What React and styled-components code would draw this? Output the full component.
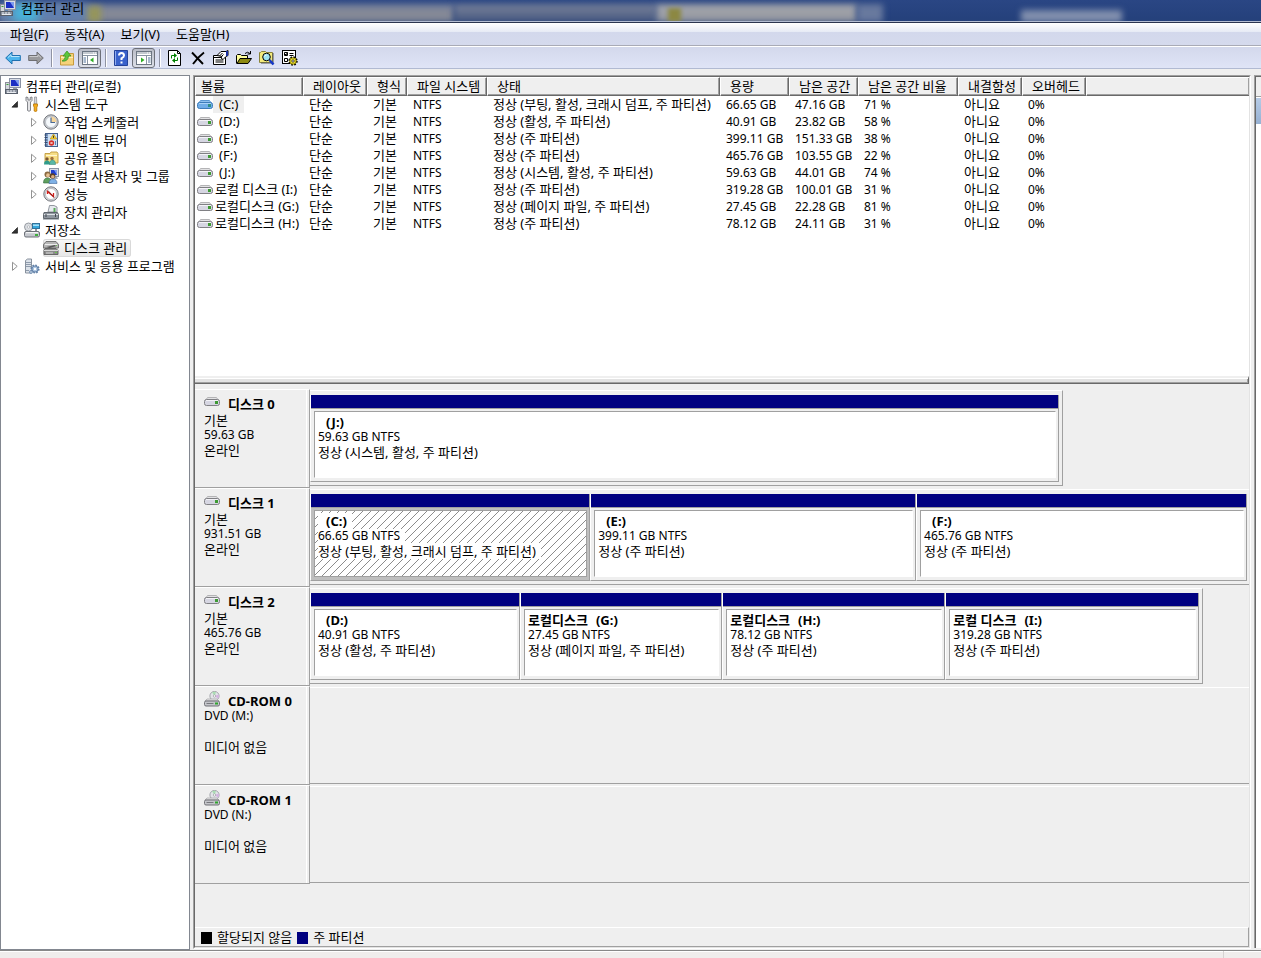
import React, { useState } from 'react';
import styled, { createGlobalStyle } from 'styled-components';

const GlobalStyle = createGlobalStyle`
  * {
    box-sizing: border-box;
  }

  body {
    margin: 0;
    background-color: #efefef;
    color: #000;
    font-family: 'Noto Sans', 'Noto Sans CJK KR', sans-serif;
    font-size: 13px;
    line-height: 15px;
  }

  button {
    font: inherit;
    color: inherit;
    border: none;
    background: none;
    padding: 0;
  }

  svg {
    display: block;
    flex-shrink: 0;
  }
`;

const Window = styled.div`
  min-height: 100vh;
  display: flex;
  flex-direction: column;
`;

const TitleBar = styled.header`
  position: relative;
  height: 23px;
  overflow: hidden;
  background: linear-gradient(#2a4684, #24407a);
  border-bottom: 1px solid #2b3550;
`;
const Glass = styled.div`
  position: absolute;
  top: ${(props) => props.$top || 4}px;
  bottom: 0;
  left: ${(props) => props.$left}%;
  width: ${(props) => props.$width}%;
  background: ${(props) => props.$color};
  filter: blur(${(props) => props.$blur || 3}px);
`;
const TitleEdge = styled.div`
  position: absolute;
  left: 0;
  right: 0;
  bottom: 0;
  height: 1px;
  background-color: #b4bdd2;
`;
const TitleText = styled.h1`
  position: relative;
  display: flex;
  align-items: center;
  gap: 5px;
  margin: 0;
  height: 16px;
  font-size: 13px;
  font-weight: 400;
`;

const MenuBar = styled.nav`
  display: flex;
  gap: 16px;
  height: 23px;
  padding: 0 10px;
  background: linear-gradient(#fff 0, #e6eaf5 9px, #d3d8ec 9px, #d5daed);
  border-bottom: 1px solid #a9abb6;
`;
const Toolbar = styled.div`
  display: flex;
  align-items: center;
  height: 23px;
  padding: 2px 0 0 1px;
  background: linear-gradient(#fff 0, #fff 1px, #d3d8ec 1px, #dfe4f6);
  border-bottom: 1px solid #b1bad2;
`;
const ToolButton = styled.button`
  display: flex;
  align-items: center;
  justify-content: center;
  width: 23px;
  height: 20px;
  border-radius: 3px;
  border: 1px solid ${(props) => (props.$pressed ? '#6d7079' : 'transparent')};
  background: ${(props) =>
    props.$pressed ? 'linear-gradient(#b9bcc7, #dcdfe8)' : 'none'};
`;
const Divider = styled.div`
  width: 8px;
  height: 18px;
  border-left: 1px solid #8f93a3;
  background: linear-gradient(90deg, #fff 1px, transparent 1px);
  background-clip: padding-box;
  margin-left: 4px;
  margin-right: -4px;
`;

const Body = styled.div`
  flex: 1;
  display: flex;
  gap: 3px;
  padding-top: 6px;
`;

const Tree = styled.ul`
  list-style: none;
  margin: 0;
  width: 190px;
  padding: 1px 0;
  background-color: #fff;
  border: 1px solid #828790;
`;
const TreeRow = styled.li`
  display: flex;
  align-items: center;
  height: 18px;
  padding-left: ${(props) => props.$indent}px;
`;
const Arrow = styled.button`
  width: 19px;
  height: 18px;
  display: flex;
  align-items: center;
  justify-content: center;
`;
const TreeLabel = styled.button`
  display: flex;
  align-items: center;
  gap: 5px;
  height: 18px;
  white-space: nowrap;

  span {
    padding-right: 4px;
  }

  ${(props) =>
    props.$selected &&
    `
    border-radius: 3px;
    background: linear-gradient(#f8f8f8, #e6e6e6);
    box-shadow: inset 0 0 0 1px #d9d9d9;
  `}
`;

const Panel = styled.main`
  flex: 1;
  min-width: 0;
  display: flex;
  flex-direction: column;
  border: 1px solid #a0a0a0;
  border-right-color: #fff;
  border-bottom-color: #fff;
  margin-bottom: 1px;
`;
const PanelInner = styled.div`
  flex: 1;
  display: flex;
  flex-direction: column;
  border: 1px solid #696969;
  border-right-color: #e3e3e3;
  border-bottom-color: #e3e3e3;
`;
const SidePanel = styled.aside`
  width: 7px;
  overflow: hidden;
  background-color: #fff;
  border-left: 1px solid #a0a0a0;
  border-top: 1px solid #a0a0a0;
  box-shadow: inset 1px 1px 0 #696969;
  margin-bottom: 2px;
  padding: 1px 0 0 1px;
`;
const SideHead = styled.div`
  height: 20px;
  background-color: #efefef;
  border-bottom: 1px solid #a0a0a0;
`;
const SideItem = styled.div`
  height: 26px;
  margin-top: 1px;
  background: linear-gradient(#b6cbe6, #96b1d3);
`;

const ListArea = styled.section`
  height: 299px;
  overflow: hidden;
  background-color: #fff;
`;
const Table = styled.table`
  width: 100%;
  table-layout: fixed;
  border-collapse: separate;
  border-spacing: 0;
`;
const Col = styled.col`
  width: ${(props) => (props.$width ? `${props.$width}px` : 'auto')};
`;
const Th = styled.th`
  height: 19px;
  padding: 0 0 0 ${(props) => (props.$first ? 5 : 9)}px;
  text-align: left;
  font-weight: 400;
  white-space: nowrap;
  overflow: hidden;
  background-color: #efefef;
  border: 1px solid #fff;
  border-right-color: #696969;
  border-bottom-color: #696969;
  box-shadow: inset -1px -1px 0 #a0a0a0;

  &:last-child {
    border-right: none;
  }
`;
const Td = styled.td`
  height: 17px;
  padding: 0 0 0 6px;
  white-space: nowrap;
  font-size: ${(props) => (props.$latin ? 12 : 13)}px;
`;
const VolumeTd = styled.td`
  height: 17px;
  padding: 0 0 0 2px;
  white-space: nowrap;
`;
const Volume = styled.div`
  display: flex;
  align-items: center;
  height: 17px;

  span {
    padding: 1px 5px 1px ${(props) => (props.$named ? 2 : 6)}px;
    background-color: ${(props) => (props.$selected ? '#efefef' : 'transparent')};
  }
`;

const Splitter = styled.div`
  height: 8px;
  border-top: 2px solid #efefef;
  border-bottom: 1px solid #696969;
  border-right: 1px solid #696969;
  background-color: #e3e3e3;
  box-shadow: inset 0 1px 0 #fff, inset -1px -1px 0 #a0a0a0;
`;

const Disks = styled.section`
  flex: 1;
  padding-top: 5px;
`;
const DiskRow = styled.article`
  display: flex;
  height: 99px;
`;
const DiskInfo = styled.div`
  width: 115px;
  flex-shrink: 0;
  padding: 7px 0 0 9px;
  border-top: 1px solid #fff;
  border-right: 1px solid #a0a0a0;
  border-bottom: 1px solid #a0a0a0;
  background: linear-gradient(270deg, transparent 2px, #fff 2px, #fff 3px, transparent 3px);
`;
const DiskTitle = styled.h2`
  display: flex;
  align-items: flex-end;
  gap: 8px;
  margin: 0;
  height: 15px;
  font-size: 13px;
  font-weight: 700;

  svg {
    margin-bottom: 2px;
  }
`;
const Line = styled.div`
  height: ${(props) => (props.$latin ? 14 : 16)}px;
  line-height: ${(props) => (props.$latin ? 14 : 16)}px;
  font-size: ${(props) => (props.$latin ? 12 : 13)}px;
`;
const Track = styled.div`
  flex: 1;
  margin: 1px 0;
  border-bottom: ${(props) => (props.$full ? '1px solid #a0a0a0' : 'none')};
  border-top: 1px solid ${(props) => (props.$full ? '#fff' : 'transparent')};
`;
const Box = styled.div`
  display: flex;
  height: 96px;
  margin-top: -1px;
  padding: 4px ${(props) => (props.$size === 100 ? 2 : 3)}px 3px 0;
  width: ${(props) => props.$size}%;
  border-top: 1px solid #fff;
  border-bottom: 1px solid #a0a0a0;
  border-right: ${(props) => (props.$size === 100 ? 'none' : '1px solid #a0a0a0')};
`;
const Partition = styled.div`
  flex: ${(props) => props.$share} 1 0;
  min-width: 0;
  display: flex;
  flex-direction: column;
  border-left: 1px solid #fff;
  border-right: 1px solid #a0a0a0;
  border-bottom: 1px solid #a0a0a0;
`;
const Bar = styled.div`
  height: 14px;
  background-color: #000080;
  border-bottom: 1px solid #a0a0a0;
`;
const PartitionBody = styled.div`
  flex: 1;
  display: flex;
  padding: 2px 2px 3px 3px;
  background-color: ${(props) => (props.$selected ? '#bfbfbf' : '#efefef')};
`;
const PartitionText = styled.div`
  flex: 1;
  min-width: 0;
  overflow: hidden;
  padding: 2px 0 0 3px;
  border: 1px solid #a0a0a0;
  border-right-color: ${(props) => (props.$selected ? '#a0a0a0' : '#fff')};
  border-bottom-color: ${(props) => (props.$selected ? '#a0a0a0' : '#fff')};
  background-color: #fff;
  white-space: nowrap;

  ${(props) =>
    props.$selected &&
    `
    background-image: linear-gradient(135deg, transparent 46%, #8c8c8c 46%, #8c8c8c 54%, transparent 54%);
    background-size: 8px 8px;
  `}

  span {
    display: inline-block;
    height: 100%;
    padding-right: 5px;
    vertical-align: top;
    background-color: #fff;
  }
`;
const PartitionName = styled.b`
  margin-left: 8px;
`;

const Legend = styled.footer`
  display: flex;
  align-items: center;
  height: 20px;
  padding: 1px 0 0 6px;
  border-top: 1px solid #fff;
  border-right: 1px solid #a0a0a0;
  border-bottom: 1px solid #a0a0a0;
`;
const Swatch = styled.i`
  width: 11px;
  height: 12px;
  margin-right: 5px;
  background-color: ${(props) => props.$color};
`;
const LegendText = styled.span`
  margin-right: 5px;
`;

const StatusBar = styled.div`
  display: flex;
  height: 8px;
  background-color: #f0edec;
  border-top: 1px solid #888;
  box-shadow: inset 0 1px 0 #fff;
`;
const StatusCell = styled.div`
  flex: 1;
  border-right: 1px solid #d6d3d2;
`;
const StatusEnd = styled.div`
  width: 37px;
`;

const Svg = ({ children, size = 16 }) => (
  <svg width={size} height={size} viewBox="0 0 16 16" aria-hidden="true">
    {children}
  </svg>
);

const ComputerIcon = () => (
  <Svg>
    <rect x="4.5" y="0.5" width="11" height="9" fill="#d9dde6" stroke="#8b93a5" />
    <rect x="6" y="2" width="8" height="6" fill="#1c2fc4" />
    <path d="M10 2h4v6z" fill="#7f9cf0" />
    <rect x="0.5" y="4.5" width="4" height="7" fill="#d4d7dd" stroke="#8b8f99" />
    <path d="M8 10h4v1.500H8z" fill="#9aa0ad" />
    <rect x="0.5" y="11.500" width="12" height="4" fill="#8a919e" stroke="#59606c" />
    <path d="M2 13h2m1 0h2m1 0h2M2 14.500h9" stroke="#e8ebf0" />
    <path d="M1.500 6.500h2" stroke="#3aa03a" />
  </Svg>
);

const ToolsIcon = () => (
  <Svg>
    <path d="M2 1v3.500L3.500 6v8.500q1.500 1.500 3 0V6L8 4.500V1L6.200 1.500V4H4V1.500z" fill="#e4e4e6" stroke="#77797f" strokeWidth="0.900" />
    <path d="M10.500 1h2l.3 7h-2.600z" fill="#d5d7dc" stroke="#85888f" strokeWidth="0.700" />
    <path d="M9.500 8h4v2l-.7 1v4q-1.300 1-2.600 0v-4l-.7-1z" fill="#f4ae1d" stroke="#b97406" strokeWidth="0.800" />
  </Svg>
);

const ClockIcon = () => (
  <Svg>
    <circle cx="8" cy="8" r="7.200" fill="#c9ccd1" stroke="#74777d" />
    <circle cx="8" cy="8" r="5.500" fill="#f4f8fb" stroke="#a3a8b0" strokeWidth="0.600" />
    <path d="M8 8V2.500A5.500 5.500 0 0 1 13.500 8z" fill="#f5d49a" />
    <path d="M8 3.500V8.500h4" fill="none" stroke="#4a6a94" strokeWidth="1.200" />
  </Svg>
);

const EventIcon = () => (
  <Svg>
    <rect x="2.500" y="1.500" width="12" height="13" fill="#8fb1dc" stroke="#44608d" />
    <rect x="5" y="2" width="9" height="12" fill="#cfe0f2" />
    <path d="M1.500 3h3M1.500 5.500h3M1.500 8h3M1.500 10.500h3M1.500 13h3" stroke="#394b69" />
    <path d="M10.500 2l3.300 5H7.200z" fill="#f7cf31" stroke="#b38d0c" strokeWidth="0.600" />
    <path d="M10.500 3.700v2.200" stroke="#333" />
    <circle cx="8.500" cy="11" r="2.700" fill="#d62e27" />
    <path d="M7.500 10l2 2m0-2l-2 2" stroke="#fff" strokeWidth="0.800" />
    <path d="M12.500 9v4" stroke="#5c7fb5" />
  </Svg>
);

const SharedIcon = () => (
  <Svg>
    <path d="M2 3.500h5l1-1.500h6l1 1.500V13H2z" fill="#f6dd85" stroke="#c09a3d" strokeWidth="0.900" />
    <path d="M3 5.500h11" stroke="#fff6cf" />
    <circle cx="4" cy="9" r="1.700" fill="#7c5631" />
    <circle cx="9" cy="8.500" r="1.700" fill="#a36f3b" />
    <path d="M1 14.500q0-4 3-4t3 4z" fill="#2f9c8b" />
    <path d="M6.500 14.500q0-4.500 3-4.500t3 4.500z" fill="#58b7a6" stroke="#2c7d70" strokeWidth="0.500" />
  </Svg>
);

const UsersIcon = () => (
  <Svg>
    <rect x="6.500" y="0.500" width="9" height="8" fill="#d9dde6" stroke="#8b93a5" />
    <rect x="8" y="2" width="6" height="5" fill="#1f3fd0" />
    <path d="M11 2h3v5z" fill="#7f9cf0" />
    <path d="M8 9h6l1 2H9z" fill="#a6acb8" />
    <circle cx="4.500" cy="6.500" r="3" fill="#8a6a42" />
    <circle cx="5" cy="7.200" r="1.900" fill="#e9c193" />
    <circle cx="9.500" cy="8" r="2.800" fill="#5d4025" />
    <circle cx="9.800" cy="8.800" r="1.800" fill="#ddb083" />
    <path d="M0.500 15q0-5 4-5t4 5z" fill="#5fa05f" stroke="#33683c" strokeWidth="0.600" />
    <path d="M6 15.500q0-4.500 4-4.500t4 4.500z" fill="#7fb1e6" stroke="#41689c" strokeWidth="0.600" />
  </Svg>
);

const PerfIcon = () => (
  <Svg>
    <circle cx="8" cy="8" r="7.200" fill="#d5d7da" stroke="#74777d" />
    <circle cx="8" cy="8" r="5.500" fill="#fff" stroke="#9da1a8" strokeWidth="0.600" />
    <path d="M4.500 8V5.500l6 5V7" fill="none" stroke="#d3201b" strokeWidth="1.300" />
    <path d="M5 4.500l6 7" stroke="#7e1716" strokeWidth="0.800" />
  </Svg>
);

const DeviceIcon = () => (
  <Svg>
    <path d="M6.500 1.500H11l3 1.500v5H5z" fill="#e6e9ed" stroke="#888d96" strokeWidth="0.900" />
    <path d="M10.500 4h2v4h-2z" fill="#58a85b" />
    <path d="M1 8.500h13.500l1 2v4h-15v-4z" fill="#8f969f" stroke="#555b63" strokeWidth="0.900" />
    <path d="M1 10.500h14" stroke="#dfe3e7" />
    <path d="M3 10v3M12.500 10v3" stroke="#434950" />
    <path d="M0 15.500h16" stroke="#b9bec4" />
  </Svg>
);

const StorageIcon = () => (
  <Svg>
    <circle cx="4.500" cy="5" r="4" fill="#dadde1" stroke="#8e939b" strokeWidth="0.900" />
    <circle cx="4.500" cy="5" r="1.200" fill="#fff" stroke="#8e939b" strokeWidth="0.500" />
    <rect x="8.500" y="1.500" width="7" height="5" fill="#35a7dc" stroke="#33729a" />
    <path d="M9 2.500h6v1.500H9z" fill="#a8e1f8" />
    <path d="M11 7h2v2h-2z" fill="#8e939b" />
    <rect x="0.500" y="9.500" width="15" height="5.500" rx="1.500" fill="#c5c8ce" stroke="#6d7178" />
    <path d="M2 10.700h12" stroke="#fff" />
    <rect x="11" y="12" width="3" height="2" fill="#3fae3d" />
  </Svg>
);

const DiskMgmtIcon = () => (
  <Svg>
    <path d="M3 1.500h10l2.500 3V8h-15V4.500z" fill="#b5b5b5" stroke="#6a6a6a" strokeWidth="0.900" />
    <path d="M2 4.500h12" stroke="#ececec" />
    <path d="M3.500 7l8-2 2 1-7 2z" fill="#555" />
    <path d="M2 8.500h11l2 2v4H1v-4z" fill="#8c8c8c" stroke="#5e5e5e" strokeWidth="0.900" />
    <path d="M1 10.500h14M3 13h7" stroke="#d8d8d8" />
    <path d="M13 5.500h1M12 12.500h2" stroke="#69c34e" />
  </Svg>
);

const ServicesIcon = () => (
  <Svg>
    <path d="M1.500 2.500l2-1.500h4v14h-6z" fill="#dce2e9" stroke="#7d8794" strokeWidth="0.900" />
    <path d="M2 4.500h5M2 6.500h5M2 8.500h5M2 12.500h3" stroke="#8693a5" strokeWidth="0.900" />
    <circle cx="11" cy="11" r="3.600" fill="#9fb9d6" stroke="#6482a8" strokeWidth="2" strokeDasharray="1.600 1.200" />
    <circle cx="11" cy="11" r="3" fill="#a9c3df" stroke="#57779f" strokeWidth="0.700" />
    <circle cx="11" cy="11" r="1.200" fill="#fff" />
    <circle cx="7" cy="14" r="1.500" fill="#b4c7dd" stroke="#6482a8" strokeWidth="0.700" />
  </Svg>
);

const DriveIcon = ({ selected }) => (
  <Svg>
    <path
      d="M3.500 3.500h9l2 3H1.500z"
      fill={selected ? '#8fc0ee' : '#e2e2e4'}
      stroke={selected ? '#5b98d2' : '#b4b4b6'}
    />
    <rect
      x="0.500"
      y="5.500"
      width="15"
      height="6"
      rx="2"
      fill={selected ? '#70ade8' : '#d6d6e2'}
      stroke={selected ? '#3d7cba' : '#808084'}
    />
    <path d="M2 6.500h12" stroke={selected ? '#a9d2f7' : '#f3f3f7'} />
    <rect x="11" y="7" width="3" height="3" fill={selected ? '#2f8f86' : '#3d9a33'} />
  </Svg>
);

const CdIcon = () => (
  <Svg>
    <circle cx="10.500" cy="5" r="4.600" fill="#e2e4e8" stroke="#93969c" strokeWidth="0.800" />
    <path d="M10.500 5L8 1.300q2-1.300 4 0z" fill="#a9dcb2" />
    <path d="M10.500 5l3.500 2.500q1.200-2 .8-4z" fill="#d5b3e2" />
    <circle cx="10.500" cy="5" r="1.200" fill="#fff" stroke="#8b8e94" strokeWidth="0.600" />
    <path d="M3 8h10l2 2H1z" fill="#e8e8ea" stroke="#a2a2a5" strokeWidth="0.700" />
    <rect x="0.500" y="10" width="15" height="5" rx="1.500" fill="#c4c5ca" stroke="#707176" />
    <path d="M2.500 12.500h7" stroke="#77787d" />
    <rect x="11" y="11.500" width="3" height="2" fill="#2fa52c" />
  </Svg>
);

const BackIcon = () => (
  <Svg>
    <path d="M0.700 8L7 2v3.500h8.300v5H7V14z" fill="#4cb4ec" stroke="#1f70b0" />
    <path d="M3 7.500L6 4.700V6.500h8.500" fill="none" stroke="#b8e6fc" />
  </Svg>
);
const ForwardIcon = () => (
  <Svg>
    <path d="M15.300 8L9 2v3.500H0.700v5H9V14z" fill="#9a9a9c" stroke="#6f6f72" />
    <path d="M1.500 6.500H10V4.700L13 7.500" fill="none" stroke="#c9c9cb" />
  </Svg>
);
const UpIcon = () => (
  <Svg>
    <path d="M1.500 5.500h5l1-2h7v11.500h-13z" fill="#f5d27a" stroke="#c79a3d" />
    <path d="M2 7.500h12" stroke="#fdeebb" />
    <path d="M3 11q3-1 3.500-5H4L8 1l4 5H9.500q-.5 6-6.500 5z" fill="#5cc63c" stroke="#2f8e22" strokeWidth="0.700" />
  </Svg>
);
const PaneIcon = ({ right }) => (
  <Svg>
    <rect x="0.500" y="1.500" width="15" height="13" fill="#fff" stroke="#6c7683" />
    <path d="M1 3h14M1 5.500h14" stroke="#8a95a3" />
    <path d="M11 3h1m1 0h1" stroke="#fff" />
    {right ? (
      <>
        <path d="M10.500 6v8" stroke="#8a95a3" />
        <path d="M12 8h2.500M12 10h2.500M12 12h2.500" stroke="#50739d" />
        <path d="M5 7.500v5L8.500 10z" fill="#2fae25" />
      </>
    ) : (
      <>
        <path d="M5.500 6v8" stroke="#8a95a3" />
        <path d="M1.500 8H4M1.500 10H4M1.500 12H4" stroke="#50739d" />
        <path d="M11.500 7.500v5L8 10z" fill="#2fae25" />
      </>
    )}
  </Svg>
);
const HelpIcon = () => (
  <Svg>
    <path d="M1.500 0.500h13v15h-13z" fill="#3a62cc" stroke="#25439a" />
    <path d="M2.500 1v14" stroke="#8fabef" />
    <path d="M6 5.500Q6 3 8.500 3T11 5.500Q11 7 8.500 8.300V10M8.500 11.500v2" fill="none" stroke="#fff" strokeWidth="2" />
  </Svg>
);
const RefreshIcon = () => (
  <Svg>
    <path d="M1.500 0.500h9l3 3v12h-12z" fill="#fff" stroke="#000" />
    <path d="M10.500 0.500v3h3" fill="none" stroke="#000" />
    <path d="M4.500 8.500V5.500H8M10.500 7.500v3H7" fill="none" stroke="#008000" />
    <path d="M7 3v5l3-2.500zM8 8v5L5 10.500z" fill="#008000" />
  </Svg>
);
const DeleteIcon = () => (
  <Svg>
    <path d="M2 2.500l11 11.500M14 2.500Q8 7 3 14" fill="none" stroke="#000" strokeWidth="1.900" />
  </Svg>
);
const PropsIcon = () => (
  <Svg>
    <path d="M0.500 5.500h12v9h-12z" fill="#fff" stroke="#000" />
    <path d="M1 7.500h11M2.500 10h8M2.500 12h8" stroke="#000" strokeWidth="1.200" />
    <path d="M4 5.500l4-4h5l2-1v5l-2 1-3 3-2-1.500 1-1.500z" fill="#fff" stroke="#000" />
    <path d="M14 1v5" stroke="#1a2fa0" strokeWidth="2" />
    <path d="M6.500 6l3-3M8.500 6.500l2-2" stroke="#000" />
  </Svg>
);
const OpenIcon = () => (
  <Svg>
    <path d="M0.500 13.500v-8l1-1h3l1 1h6v3" fill="#ffff9c" stroke="#000" />
    <path d="M1 13.500l3-5h11.500l-3.500 5z" fill="#8d8a12" stroke="#000" />
    <path d="M9 3.500q2.500-2.500 5 0M14.500 1v3h-3" fill="none" stroke="#000" />
  </Svg>
);
const SearchIcon = () => (
  <Svg>
    <path d="M0.500 12.500v-10h1l1-1h4l1 1h6v10z" fill="#f3ea7c" stroke="#8a8439" />
    <path d="M14 3v10H2" fill="none" stroke="#555" />
    <circle cx="7.500" cy="7" r="3.800" fill="#9ee4f2" stroke="#000" />
    <path d="M5.500 6.500q.5-1.500 2-1.500" stroke="#fff" fill="none" />
    <path d="M10.500 10l4 4.500" stroke="#1538c8" strokeWidth="2.500" />
  </Svg>
);
const SettingsIcon = () => (
  <Svg>
    <rect x="0.500" y="0.500" width="13" height="13" fill="#fff" stroke="#000" />
    <path d="M2.500 2.500h3v3h-3zM2.500 8.500h3v3h-3z" fill="#fff" stroke="#000" />
    <path d="M3 4l1 1 1.500-2.500" fill="none" stroke="#000" />
    <path d="M7.500 3.500h4M7.500 5.500h4M7.500 8.500h2" stroke="#000" />
    <circle cx="11" cy="11" r="3.700" fill="#e8d91e" stroke="#000" strokeWidth="2" strokeDasharray="1.600 1.300" />
    <circle cx="11" cy="11" r="3.200" fill="#efe12b" stroke="#6b6300" strokeWidth="0.700" />
    <circle cx="11" cy="11" r="1.200" fill="#fff" stroke="#000" strokeWidth="0.700" />
  </Svg>
);

const ArrowOpen = () => (
  <Svg size={10}>
    <path d="M12 4v9H3z" fill="#333" stroke="#111" />
  </Svg>
);
const ArrowClosed = () => (
  <Svg size={10}>
    <path d="M4 2v13l7.500-6.500z" fill="#fff" stroke="#8c8c8c" strokeWidth="1.500" />
  </Svg>
);

const menus = ['파일(F)', '동작(A)', '보기(V)', '도움말(H)'];

const tools = [
  { label: '뒤로', icon: BackIcon },
  { label: '앞으로', icon: ForwardIcon },
  null,
  { label: '위로', icon: UpIcon },
  { label: '콘솔 트리 표시/숨기기', icon: PaneIcon, pressed: true },
  null,
  { label: '도움말', icon: HelpIcon },
  { label: '작업 창 표시/숨기기', icon: PaneIcon, pressed: true, right: true },
  null,
  { label: '새로 고침', icon: RefreshIcon },
  { label: '삭제', icon: DeleteIcon },
  { label: '속성', icon: PropsIcon },
  { label: '열기', icon: OpenIcon },
  { label: '탐색', icon: SearchIcon },
  { label: '설정', icon: SettingsIcon },
];

const tree = [
  { text: '컴퓨터 관리(로컬)', icon: ComputerIcon, level: 0 },
  { text: '시스템 도구', icon: ToolsIcon, level: 1, arrow: 'open' },
  { text: '작업 스케줄러', icon: ClockIcon, level: 2, arrow: 'closed' },
  { text: '이벤트 뷰어', icon: EventIcon, level: 2, arrow: 'closed' },
  { text: '공유 폴더', icon: SharedIcon, level: 2, arrow: 'closed' },
  { text: '로컬 사용자 및 그룹', icon: UsersIcon, level: 2, arrow: 'closed' },
  { text: '성능', icon: PerfIcon, level: 2, arrow: 'closed' },
  { text: '장치 관리자', icon: DeviceIcon, level: 2 },
  { text: '저장소', icon: StorageIcon, level: 1, arrow: 'open' },
  { text: '디스크 관리', icon: DiskMgmtIcon, level: 2 },
  { text: '서비스 및 응용 프로그램', icon: ServicesIcon, level: 1, arrow: 'closed' },
];

const columns = [
  { title: '볼륨', width: 108 },
  { title: '레이아웃', width: 64 },
  { title: '형식', width: 40 },
  { title: '파일 시스템', width: 80 },
  { title: '상태', width: 233 },
  { title: '용량', width: 69 },
  { title: '남은 공간', width: 69 },
  { title: '남은 공간 비율', width: 100 },
  { title: '내결함성', width: 64 },
  { title: '오버헤드', width: 64 },
  { title: '' },
];

const volumes = [
  { name: '', letter: '(C:)', state: '정상 (부팅, 활성, 크래시 덤프, 주 파티션)', size: '66.65 GB', free: '47.16 GB', rate: '71 %' },
  { name: '', letter: '(D:)', state: '정상 (활성, 주 파티션)', size: '40.91 GB', free: '23.82 GB', rate: '58 %' },
  { name: '', letter: '(E:)', state: '정상 (주 파티션)', size: '399.11 GB', free: '151.33 GB', rate: '38 %' },
  { name: '', letter: '(F:)', state: '정상 (주 파티션)', size: '465.76 GB', free: '103.55 GB', rate: '22 %' },
  { name: '', letter: '(J:)', state: '정상 (시스템, 활성, 주 파티션)', size: '59.63 GB', free: '44.01 GB', rate: '74 %' },
  { name: '로컬 디스크 ', letter: '(I:)', state: '정상 (주 파티션)', size: '319.28 GB', free: '100.01 GB', rate: '31 %' },
  { name: '로컬디스크 ', letter: '(G:)', state: '정상 (페이지 파일, 주 파티션)', size: '27.45 GB', free: '22.28 GB', rate: '81 %' },
  { name: '로컬디스크 ', letter: '(H:)', state: '정상 (주 파티션)', size: '78.12 GB', free: '24.11 GB', rate: '31 %' },
];

// box is the disk's width in percent, share is the width of a partition in it
const disks = [
  {
    title: '디스크 0',
    size: '59.63 GB',
    box: 80.2,
    parts: [{ letter: '(J:)', share: 1 }],
  },
  {
    title: '디스크 1',
    size: '931.51 GB',
    box: 100,
    parts: [
      { letter: '(C:)', share: 280 },
      { letter: '(E:)', share: 326 },
      { letter: '(F:)', share: 331 },
    ],
  },
  {
    title: '디스크 2',
    size: '465.76 GB',
    box: 95.1,
    parts: [
      { letter: '(D:)', share: 210 },
      { letter: '(G:)', share: 202 },
      { letter: '(H:)', share: 223 },
      { letter: '(I:)', share: 254 },
    ],
  },
];

const cdroms = [
  { title: 'CD-ROM 0', drive: 'DVD (M:)' },
  { title: 'CD-ROM 1', drive: 'DVD (N:)' },
];

function App() {
  const [selected, setSelected] = useState('(C:)');
  const [node, setNode] = useState('디스크 관리');

  return (
    <>
      <GlobalStyle />
      <Window>
        <TitleBar>
          <Glass $left={0} $width={36} $color="linear-gradient(#74809e, #858996 8px)" />
          <Glass $left={36} $width={16} $color="linear-gradient(#7a839b, #46587f)" />
          <Glass $left={52} $width={16} $color="linear-gradient(#a4a6ad, #94979f)" />
          <Glass $left={68} $width={2} $color="#68799e" />
          <Glass $left={0} $width={7} $color="#5f7fb0" $blur={4} />
          <Glass $left={1} $width={2} $color="#48b4da" $blur={4} />
          <Glass $left={7} $width={1} $color="#96965a" $blur={3} $top={6} />
          <Glass $left={53} $width={1} $color="#8c8842" $blur={2} $top={8} />
          <Glass $left={81} $width={8} $color="#8290ae" $top={10} />
          <TitleEdge />
          <TitleText>
            <ComputerIcon />
            컴퓨터 관리
          </TitleText>
        </TitleBar>
        <MenuBar>
          {menus.map((el) => (
            <button key={el}>{el}</button>
          ))}
        </MenuBar>
        <Toolbar>
          {tools.map((el, i) =>
            el ? (
              <ToolButton key={i} $pressed={el.pressed} aria-label={el.label}>
                <el.icon right={el.right} />
              </ToolButton>
            ) : (
              <Divider key={i} />
            )
          )}
        </Toolbar>
        <Body>
          <Tree>
            {tree.map((el) => (
              <TreeRow key={el.text} $indent={el.level === 2 ? 23 : 4}>
                {el.level > 0 && (
                  <Arrow aria-label={el.text}>
                    {el.arrow === 'open' && <ArrowOpen />}
                    {el.arrow === 'closed' && <ArrowClosed />}
                  </Arrow>
                )}
                <TreeLabel $selected={el.text === node} onClick={() => setNode(el.text)}>
                  <el.icon />
                  <span>{el.text}</span>
                </TreeLabel>
              </TreeRow>
            ))}
          </Tree>
          <Panel>
            <PanelInner>
              <ListArea>
                <Table>
                  <colgroup>
                    {columns.map((el) => (
                      <Col key={el.title} $width={el.width} />
                    ))}
                  </colgroup>
                  <thead>
                    <tr>
                      {columns.map((el, i) => (
                        <Th key={el.title} $first={i === 0}>
                          {el.title}
                        </Th>
                      ))}
                    </tr>
                  </thead>
                  <tbody>
                    {volumes.map((el) => (
                      <tr key={el.letter} onClick={() => setSelected(el.letter)}>
                        <VolumeTd>
                          <Volume $named={el.name} $selected={el.letter === selected}>
                            <DriveIcon selected={el.letter === selected} />
                            <span>
                              {el.name}
                              {el.letter}
                            </span>
                          </Volume>
                        </VolumeTd>
                        <Td>단순</Td>
                        <Td>기본</Td>
                        <Td $latin>NTFS</Td>
                        <Td>{el.state}</Td>
                        <Td $latin>{el.size}</Td>
                        <Td $latin>{el.free}</Td>
                        <Td $latin>{el.rate}</Td>
                        <Td>아니요</Td>
                        <Td $latin>0%</Td>
                        <Td />
                      </tr>
                    ))}
                  </tbody>
                </Table>
              </ListArea>
              <Splitter />
              <Disks>
                {disks.map((disk) => (
                  <DiskRow key={disk.title}>
                    <DiskInfo>
                      <DiskTitle>
                        <DriveIcon />
                        {disk.title}
                      </DiskTitle>
                      <Line>기본</Line>
                      <Line $latin>{disk.size}</Line>
                      <Line>온라인</Line>
                    </DiskInfo>
                    <Track>
                      <Box $size={disk.box}>
                        {disk.parts.map((part) => {
                          const volume = volumes.find((el) => el.letter === part.letter);
                          const active = part.letter === selected;
                          return (
                            <Partition
                              key={part.letter}
                              $share={part.share}
                              onClick={() => setSelected(part.letter)}
                            >
                              <Bar />
                              <PartitionBody $selected={active}>
                                <PartitionText $selected={active}>
                                  <Line>
                                    <span>
                                      {volume.name && <b>{volume.name.trim()}</b>}
                                      <PartitionName>{volume.letter}</PartitionName>
                                    </span>
                                  </Line>
                                  <Line $latin>
                                    <span>{volume.size} NTFS</span>
                                  </Line>
                                  <Line>
                                    <span>{volume.state}</span>
                                  </Line>
                                </PartitionText>
                              </PartitionBody>
                            </Partition>
                          );
                        })}
                      </Box>
                    </Track>
                  </DiskRow>
                ))}
                {cdroms.map((cd) => (
                  <DiskRow key={cd.title}>
                    <DiskInfo>
                      <DiskTitle>
                        <CdIcon />
                        {cd.title}
                      </DiskTitle>
                      <Line $latin>{cd.drive}</Line>
                      <Line />
                      <Line>미디어 없음</Line>
                    </DiskInfo>
                    <Track $full />
                  </DiskRow>
                ))}
              </Disks>
              <Legend>
                <Swatch $color="#000" />
                <LegendText>할당되지 않음</LegendText>
                <Swatch $color="#000080" />
                <LegendText>주 파티션</LegendText>
              </Legend>
            </PanelInner>
          </Panel>
          <SidePanel>
            <SideHead />
            <SideItem />
          </SidePanel>
        </Body>
        <StatusBar>
          <StatusCell />
          <StatusEnd />
        </StatusBar>
      </Window>
    </>
  );
}

export default App;
